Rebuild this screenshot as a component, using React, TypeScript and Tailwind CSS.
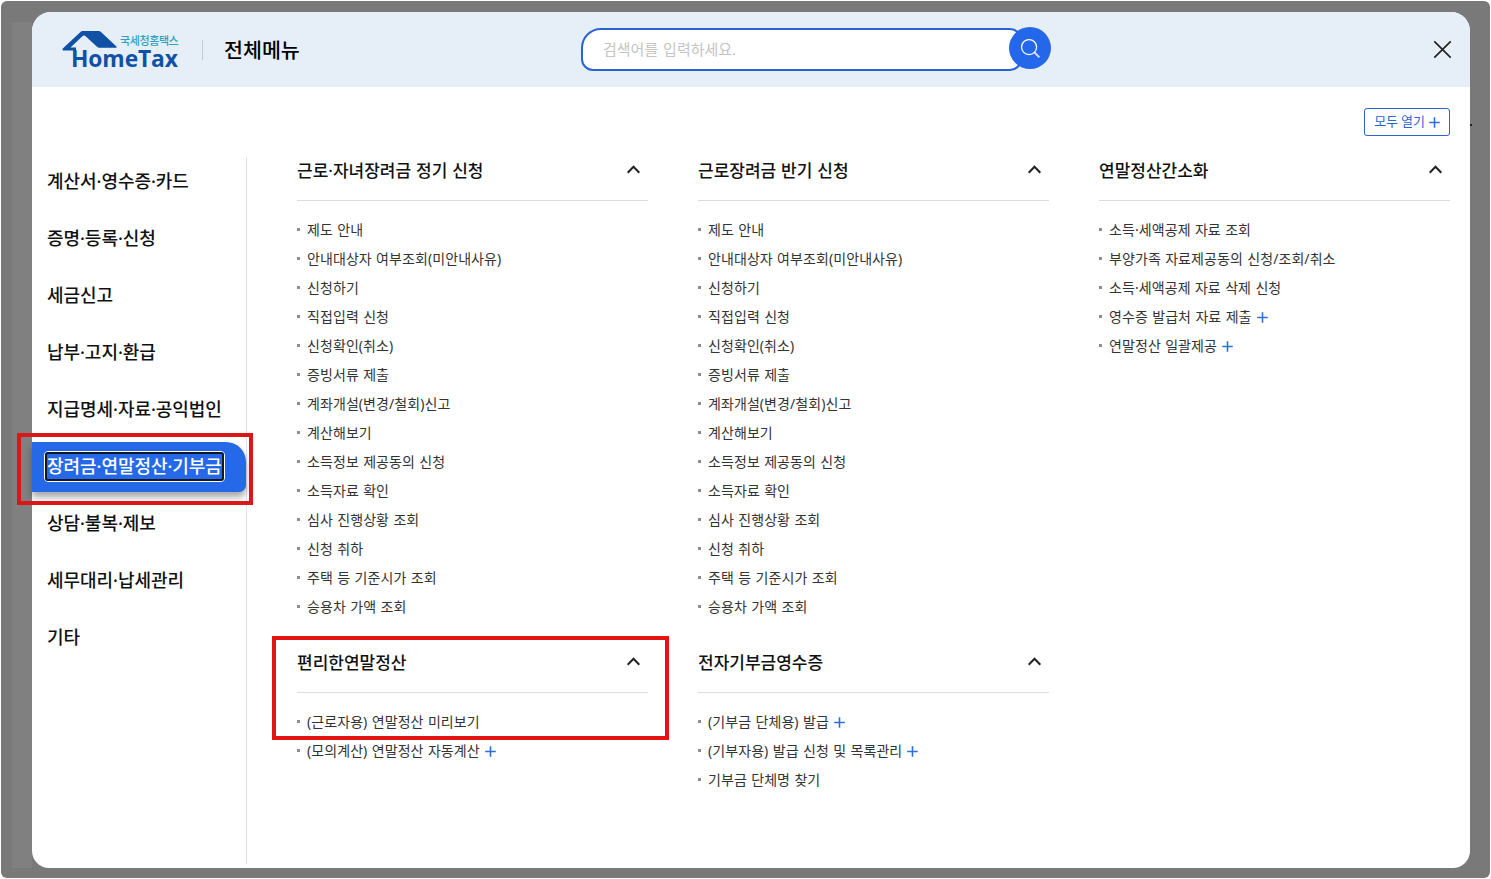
import React from 'react';

interface MenuItem {
  label: string;
  more?: boolean;
}

interface MenuSection {
  title: string;
  items: MenuItem[];
}

const categories = [
  '계산서·영수증·카드',
  '증명·등록·신청',
  '세금신고',
  '납부·고지·환급',
  '지급명세·자료·공익법인',
  '장려금·연말정산·기부금',
  '상담·불복·제보',
  '세무대리·납세관리',
  '기타',
];

const activeCategory = '장려금·연말정산·기부금';

const incentiveItems: MenuItem[] = [
  { label: '제도 안내' },
  { label: '안내대상자 여부조회(미안내사유)' },
  { label: '신청하기' },
  { label: '직접입력 신청' },
  { label: '신청확인(취소)' },
  { label: '증빙서류 제출' },
  { label: '계좌개설(변경/철회)신고' },
  { label: '계산해보기' },
  { label: '소득정보 제공동의 신청' },
  { label: '소득자료 확인' },
  { label: '심사 진행상황 조회' },
  { label: '신청 취하' },
  { label: '주택 등 기준시가 조회' },
  { label: '승용차 가액 조회' },
];

const sections: MenuSection[] = [
  { title: '근로·자녀장려금 정기 신청', items: incentiveItems },
  { title: '근로장려금 반기 신청', items: incentiveItems },
  {
    title: '연말정산간소화',
    items: [
      { label: '소득·세액공제 자료 조회' },
      { label: '부양가족 자료제공동의 신청/조회/취소' },
      { label: '소득·세액공제 자료 삭제 신청' },
      { label: '영수증 발급처 자료 제출', more: true },
      { label: '연말정산 일괄제공', more: true },
    ],
  },
  {
    title: '편리한연말정산',
    items: [
      { label: '(근로자용) 연말정산 미리보기' },
      { label: '(모의계산) 연말정산 자동계산', more: true },
    ],
  },
  {
    title: '전자기부금영수증',
    items: [
      { label: '(기부금 단체용) 발급', more: true },
      { label: '(기부자용) 발급 신청 및 목록관리', more: true },
      { label: '기부금 단체명 찾기' },
    ],
  },
];

const PlusIcon: React.FC = () => (
  <svg width="11" height="11" viewBox="0 0 11 11" fill="none" stroke="#2f6fd8" strokeWidth="1.6">
    <path d="M5.5 0.2v10.6M0.2 5.5h10.6" />
  </svg>
);

const Logo: React.FC = () => (
  <div className="relative h-[40px] w-[118px]">
    <svg className="absolute left-0 top-0" width="56" height="24" viewBox="0 0 56 24" fill="#0f52a5">
      <path d="M20.5 2H36.5Q38 2 39.2 3.2L54.5 17.6Q55 18.8 54 18.8H37Q36 18.8 35 17.8L23.6 7.2Q22 6 20.4 7.2L8.5 18.6H14V21.5H1Q0 20.8 0.8 19.6L18.5 3Q19.4 2 20.5 2Z" />
    </svg>
    <span className="absolute left-[58px] top-[5px] whitespace-nowrap font-['Noto_Sans_CJK_KR',sans-serif] text-[11px] font-medium leading-[12px] tracking-[-0.4px] text-[#2fa0bd]">
      국세청홈택스
    </span>
    <span className="absolute left-[9px] top-[18px] whitespace-nowrap font-['Open_Sans',sans-serif] text-[22.8px] font-bold leading-[24px] tracking-[-0.1px] text-[#0f52a5]">
      HomeTax
    </span>
  </div>
);

const Header: React.FC = () => (
  <header className="flex h-[75px] items-start bg-[#e6eef8]">
    <div className="ml-[30px] mt-[17px]">
      <Logo />
    </div>
    <div className="ml-[22px] mt-[28px] h-[20px] w-px bg-[#c3c9d2]" />
    <h1 className="ml-[21px] mt-[23px] w-[357px] text-[20.6px] font-medium leading-[30px] text-black">전체메뉴</h1>
    <div className="mt-[15px] flex items-start">
      <div className="mt-px flex h-[43px] w-[441px] items-center rounded-[12px] rounded-tl-[20px] border-2 border-[#2b64cf] bg-white pb-[2px] pl-[20px]">
        <span className="text-[15px] leading-[22px] text-[#c4c4c4] [word-spacing:1px]">검색어를 입력하세요.</span>
      </div>
      <button className="z-10 -ml-[13px] flex h-[42px] w-[42px] items-center justify-center rounded-full bg-[#2567ea]">
        <svg className="ml-px mt-px" width="21" height="21" viewBox="0 0 22 22" fill="none" stroke="#fff">
          <circle cx="9.5" cy="9.5" r="7.9" strokeWidth="1.3" />
          <path d="M15.2 15.2L20.3 20.3" strokeWidth="2" strokeOpacity="0.8" />
        </svg>
      </button>
    </div>
    <button className="ml-auto mr-[18px] mt-[28px]">
      <svg width="19" height="19" viewBox="0 0 19 19" fill="none" stroke="#222" strokeWidth="1.7">
        <path d="M1.3 1.3L17.7 17.7M17.7 1.3L1.3 17.7" />
      </svg>
    </button>
  </header>
);

const Sidebar: React.FC = () => (
  <nav className="h-[707px] w-[215px] shrink-0 border-r border-[#e1e1ee]">
    <ul className="flex flex-col gap-[7px]">
      {categories.map((name) =>
        name === activeCategory ? (
          <li
            key={name}
            className="relative flex h-[50px] items-center rounded-br-[7px] rounded-tr-[20px] bg-[#2569e9] pl-[12px] shadow-[0_5px_7px_rgba(0,0,0,0.35)]"
          >
            <span className="mb-[2px] rounded-[4px] border border-white">
              <span className="flex h-[29px] w-[179px] items-center whitespace-nowrap rounded-[3px] border-2 border-[#101828] text-[18px] font-medium tracking-[-0.05px] text-white">
                {name}
              </span>
            </span>
            {/* 강조 표시 */}
            <div className="pointer-events-none absolute -left-[15px] -top-[9px] h-[72px] w-[236px] border-4 border-[#db1717]" />
          </li>
        ) : (
          <li key={name} className="flex h-[50px] items-center whitespace-nowrap pb-px pl-[15px] text-[18px] font-medium tracking-[-0.05px] text-[#111]">
            {name}
          </li>
        )
      )}
    </ul>
  </nav>
);

const Section: React.FC<{ section: MenuSection; highlighted?: boolean }> = ({ section, highlighted }) => (
  <section className="relative">
    <div className="flex h-[61px] items-center justify-between border-b border-[#dcdcdc] pr-[8px]">
      <h2 className="mt-[2px] text-[17px] font-medium leading-[26px] text-[#111] [word-spacing:0.5px]">{section.title}</h2>
      <svg className="-mt-[2px]" width="13" height="9" viewBox="0 0 13 9" fill="none" stroke="#222" strokeWidth="2">
        <path d="M0.7 7.7L6.5 1.7L12.3 7.7" />
      </svg>
    </div>
    <ul className="pt-[15px]">
      {section.items.map((item) => (
        <li key={item.label} className="flex h-[29px] items-center text-[14px] text-[#333]">
          <span className="mb-[2px] mr-[7px] h-[3px] w-[3px] bg-[#8c8c8c]" />
          <span className="mb-[3px] mr-[5px] whitespace-nowrap tracking-[0.08px] [word-spacing:0.6px]">{item.label}</span>
          {item.more && <PlusIcon />}
        </li>
      ))}
    </ul>
    {highlighted && (
      <div className="pointer-events-none absolute -left-[25px] top-[4px] h-[104px] w-[397px] border-4 border-[#e51414]" />
    )}
  </section>
);

export default function App() {
  return (
    <div className="h-[879px] w-[1491px] overflow-hidden bg-white pl-px pt-px font-['Noto_Sans','Noto_Sans_CJK_KR',sans-serif]">
      <div className="relative h-[877px] w-[1489px] rounded-[6px] bg-[#797979] pl-[31px] pt-[11px]">
        <div className="absolute left-[11px] top-[21px] h-[846px] w-[20px] bg-[#808080]" />
        <div className="absolute left-[1469px] top-[123px] h-[2px] w-[2px] bg-[#222]" />
        <div className="relative w-[1438px]">
          <div className="h-[856px] overflow-hidden rounded-b-[17px] rounded-t-[19px] bg-white">
            <Header />
            <div className="flex justify-end pr-[20px] pt-[21px]">
              <button className="flex h-[28px] w-[86px] items-center justify-center gap-[4px] rounded-[3px] border border-[#2b64cf] text-[13px] text-[#2b64cf]">
                <span className="whitespace-nowrap tracking-[-0.15px]">모두 열기</span>
                <PlusIcon />
              </button>
            </div>
          </div>
          {/* 메뉴 본문 */}
          <div className="-mt-[711px] flex">
            <Sidebar />
            <main className="-mt-[17px] ml-[50px] grid grid-cols-[351px_351px_351px] content-start gap-x-[50px] gap-y-[10px]">
              {sections.map((section) => (
                <Section key={section.title} section={section} highlighted={section.title === '편리한연말정산'} />
              ))}
            </main>
          </div>
        </div>
      </div>
    </div>
  );
}
